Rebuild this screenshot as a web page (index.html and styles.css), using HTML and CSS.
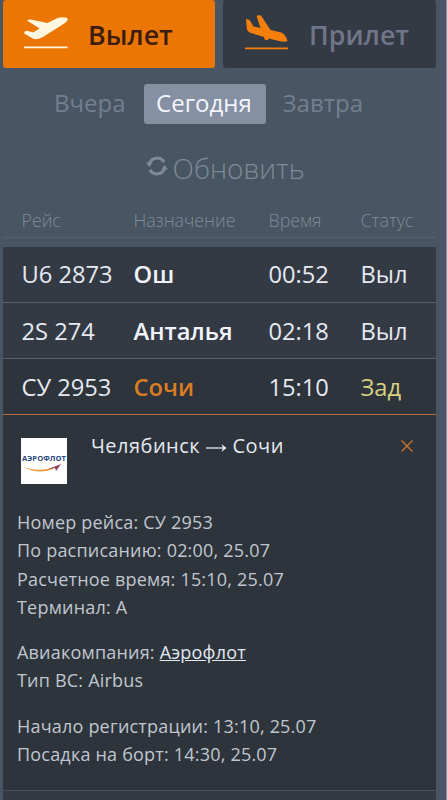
FILE: index.html
```html
<!DOCTYPE html>
<html lang="ru">
<head>
<meta charset="utf-8">
<title>Табло</title>
<link rel="stylesheet" href="styles.css">
</head>
<body>
<main class="board">
  <nav class="tabs">
    <a class="tab tab-active">
      <svg class="plane" width="46" height="38" viewBox="0 0 46 38"><path d="M4 5.500Q6 4 9 4.800L24.500 8L33.500 3.500Q39 1.500 44.500 3Q45.500 5 42 8L20 22Q13 26 8 22.500L1.200 18.500Q1 16 4.500 15.800L10 17.500L16.500 13.500Z"/><path d="M1 31.500H44.500V33.200H1Z"/></svg>
      <span>Вылет</span>
    </a>
    <a class="tab">
      <svg class="plane plane-down" width="46" height="38" viewBox="0 0 46 38"><path d="M2 4L5.500 4.700L9.500 11.500L16.500 13L12.700 1.500Q13 -.2 17 .6L26.500 15L37.500 17.500Q42 20 43.500 26Q41 27.500 35 26L25 23.500Q24 26 20.700 24.500L20 22L7 18Q3 16.500 2.800 13Z"/><path d="M1 32.500H44V34.300H1Z"/></svg>
      <span>Прилет</span>
    </a>
  </nav>
  <div class="days"><a class="day">Вчера</a><a class="day day-active">Сегодня</a><a class="day">Завтра</a></div>
  <div class="refresh">
    <svg width="22" height="22" viewBox="0 0 22 22"><path d="M3.300 9A8 8 0 0 1 18 7.200M18.700 13A8 8 0 0 1 4 14.800" fill="none" stroke="currentColor" stroke-width="3"/><path d="M0 7.500H6.500L3.400 12ZM22 14.500H15.500L18.600 10Z" fill="currentColor"/></svg>
    <span>Обновить</span>
  </div>
  <div class="row head"><span>Рейс</span><span>Назначение</span><span>Время</span><span>Статус</span></div>
  <section class="flights">
    <div class="row"><span>U6 2873</span><b>Ош</b><span>00:52</span><span>Выл</span></div>
    <div class="row second"><span>2S 274</span><b>Анталья</b><span>02:18</span><span>Выл</span></div>
    <div class="row open"><span>СУ 2953</span><b>Сочи</b><span>15:10</span><span class="late">Зад</span></div>
    <article class="details">
      <header class="route">
        <svg class="logo" width="46" height="46" viewBox="0 0 46 46"><rect width="46" height="46" fill="#fff"/><text x="1" y="23" textLength="44" lengthAdjust="spacingAndGlyphs">АЭРОФЛОТ</text><path d="M3 29Q18 35 33 29L32 31Q17 37 3 29Z" fill="#e79a3b"/><path d="M27 31L35 28L40 26L38 29L35 33L34 30Z" fill="#8c4460"/></svg>
        <h2>Челябинск <svg class="arrow" width="21" height="12" viewBox="0 0 21 12"><path d="M0 6H19" stroke="currentColor" stroke-width="1.300"/><path d="M15.500 2L20.500 6L15.500 10L17 6Z" fill="currentColor"/></svg> Сочи</h2>
        <svg class="close" width="14" height="14" viewBox="0 0 14 14"><path d="M1.500 1.500L12.500 12.500M12.500 1.500L1.500 12.500"/></svg>
      </header>
      <p>Номер рейса: СУ 2953<br>По расписанию: 02:00, 25.07<br>Расчетное время: 15:10, 25.07<br>Терминал: А</p>
      <p>Авиакомпания: <a class="link">Аэрофлот</a><br>Тип ВС: Airbus</p>
      <p>Начало регистрации: 13:10, 25.07<br>Посадка на борт: 14:30, 25.07</p>
    </article>
    <div class="next"></div>
  </section>
</main>
</body>
</html>
```
FILE: styles.css
```css
* { box-sizing: border-box; }
body {
  margin: 0;
  height: 800px;
  overflow: hidden;
  background: linear-gradient(90deg, #485562 0 440px, #48556d 442px 446px, #8a93a0 446px);
  font-family: "Open Sans", sans-serif;
  color: #e4e9f2;
}
.board { width: 433px; margin-left: 3px; }
.tabs { display: grid; grid-template-columns: 212px 213px; gap: 8px; height: 68px; }
.tab {
  display: flex;
  align-items: center;
  height: 68px;
  background: #333a44;
  border-radius: 3px;
  padding-left: 20px;
  font-weight: 600;
  line-height: 68px;
  color: #707588;
}
.tab span { padding-top: 1px; margin-left: 20px; font-size: 26.8px; }
.tab-active { background: #eb7604; color: #3b1d12; }
.tab-active span { margin-left: 19px; }
.plane { fill: #fff7df; }
.plane-down { fill: #f47f0b; margin-left: 1px; margin-right: -1px; }
.days { display: flex; height: 40px; margin: 16px 0 0 34px; }
.day { padding: 0 17px; line-height: 38px; font-size: 24px; color: #747f8e; }
.day-active { width: 122px; margin-left: 1px; padding: 0 12.500px; background: #8690a3; color: #f3f5fc; border-radius: 3px; }
.refresh { display: flex; height: 50px; margin: 18px 0 0 143px; gap: 4.500px; font-size: 28px; font-weight: 300; line-height: 52px; color: #7f8a97; }
.refresh svg { margin-top: 13px; }
.row {
  display: grid;
  grid-template-columns: 112px 135px 92px 1fr;
  padding-left: 18.500px;
  height: 56px;
  line-height: 54px;
  font-size: 23.700px;
  border-bottom: 1px solid #56616d;
  background: #333a44;
  white-space: nowrap;
}
.row b { font-weight: 600; color: #f1f4fa; }
.head { height: 46px; line-height: 57px; margin-bottom: 9px; font-size: 17.800px; font-weight: 300; color: #818b98; background: none; }
.flights { background: #2d343c; }
.second { line-height: 56px; }
.open { background: #2d343c; border-color: #b56b35; line-height: 57px; }
.open b { color: #dc7c22; }
.open .late { color: #d8d083; }
.details { height: 376px; border-bottom: 1px solid #46535d; padding: 0 14px; }
.route { display: flex; height: 93px; padding: 23px 0 0 4px; }
.route h2 { flex: 1; margin: -8px 0 0 24px; font-size: 20px; font-weight: 400; line-height: 32px; letter-spacing: .48px; }
.arrow { vertical-align: -1px; }
.logo text { font: bold 7px "Open Sans", sans-serif; fill: #294b80; }
.close { margin: 1px 8px 0 0; stroke: #c97331; stroke-width: 1.4; fill: none; }
.details p { margin: 0 0 17px; font-size: 18px; letter-spacing: .2px; line-height: 28.3px; color: #c0c7d0; white-space: nowrap; }
.link { color: #e1e8f2; text-decoration: underline; }
.next { height: 9px; background: #333a44; }
```
